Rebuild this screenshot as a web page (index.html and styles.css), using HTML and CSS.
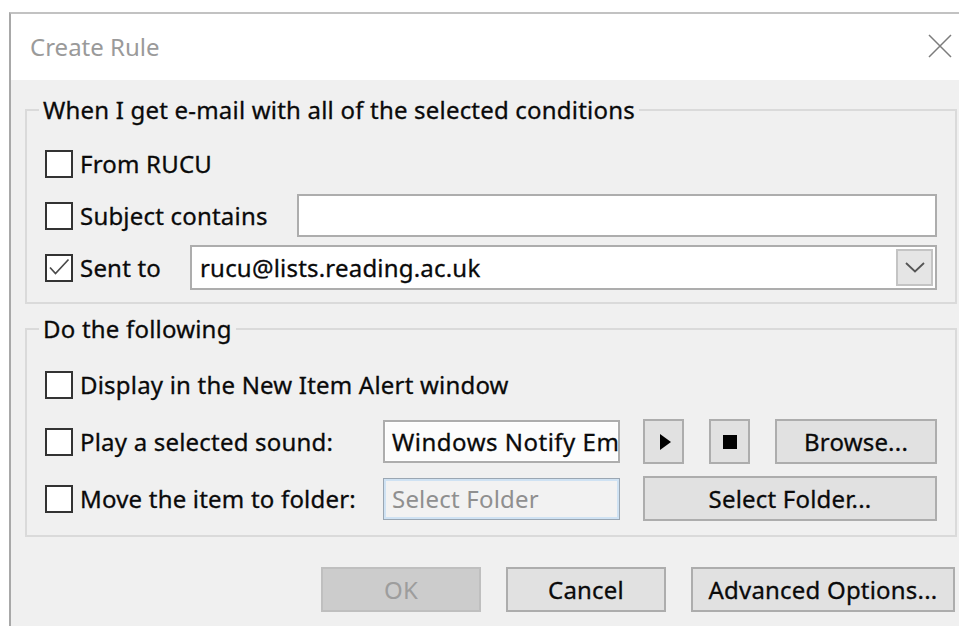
FILE: index.html
```html
<!DOCTYPE html>
<html lang="en">
<head>
<meta charset="utf-8">
<title>Create Rule</title>
<link rel="stylesheet" href="styles.css">
</head>
<body>
<div class="desk">
  <div class="dialog">
    <div class="titlebar">
      <span class="title">Create Rule</span>
      <span class="close">
        <svg width="24" height="24" viewBox="0 0 24 24"><path d="M1 1L23 23M23 1L1 23" stroke="#7c7c7c" stroke-width="1.5" fill="none"/></svg>
      </span>
    </div>
    <div class="content">
      <fieldset class="group group-conditions">
        <legend>When I get e-mail with all of the selected conditions</legend>
        <div class="row">
          <label class="check"><span class="box"></span>From RUCU</label>
        </div>
        <div class="row">
          <label class="check w-subject"><span class="box"></span>Subject contains</label>
          <span class="field grow"></span>
        </div>
        <div class="row">
          <label class="check w-sent"><span class="box"><svg width="24" height="24" viewBox="0 0 24 24"><path d="M3 11.5L8.5 17.5L21.5 3.5" stroke="#4a4a4a" stroke-width="1.7" fill="none"/></svg></span>Sent to</label>
          <span class="combo grow">
            <span class="combo-text">rucu@lists.reading.ac.uk</span>
            <span class="drop"><svg width="20" height="11" viewBox="0 0 20 11"><path d="M1 1L10 9.5L19 1" stroke="#555" stroke-width="1.8" fill="none"/></svg></span>
          </span>
        </div>
      </fieldset>

      <fieldset class="group group-actions">
        <legend>Do the following</legend>
        <div class="row">
          <label class="check"><span class="box"></span>Display in the New Item Alert window</label>
        </div>
        <div class="row">
          <label class="check w-action"><span class="box"></span>Play a selected sound:</label>
          <span class="field sound"><span class="field-text">Windows Notify Email</span></span>
          <span class="btn icon-btn"><span class="play"></span></span>
          <span class="btn icon-btn"><span class="stop"></span></span>
          <span class="btn grow">Browse...</span>
        </div>
        <div class="row">
          <label class="check w-action"><span class="box"></span>Move the item to folder:</label>
          <span class="field folder"><span class="field-text placeholder">Select Folder</span></span>
          <span class="btn grow">Select Folder...</span>
        </div>
      </fieldset>

      <div class="buttons">
        <span class="btn btn-ok disabled">OK</span>
        <span class="btn btn-cancel">Cancel</span>
        <span class="btn btn-advanced">Advanced Options...</span>
      </div>
    </div>
  </div>
</div>
</body>
</html>
```

FILE: styles.css
```css
html, body {
  margin: 0;
  padding: 0;
  background: #ffffff;
  overflow: hidden;
  height: 626px;
}

body {
  font-family: "Noto Sans", "Open Sans", sans-serif;
  font-size: 24px;
  letter-spacing: 0.2px;
  color: #0a0a0a;
}

.desk {
  padding: 12px 0 0 9px;
}

.dialog {
  box-sizing: border-box;
  width: 964px;
  height: 640px;
  border-top: 2px solid #c2c2c2;
  border-left: 2px solid #a8a8a8;
  border-right: 2px solid #a8a8a8;
  background: #f0f0f0;
  -webkit-text-stroke: 0.3px #0a0a0a;
}

/* window caption */
.titlebar {
  height: 66px;
  background: #ffffff;
  display: flex;
  align-items: center;
  justify-content: space-between;
  padding: 0 19px 0 19px;
}

.title {
  color: #9a9a9a;
  font-size: 24px;
  line-height: 28px;
  margin-top: -1px;
  letter-spacing: 0;
  -webkit-text-stroke: 0;
}

.close {
  display: flex;
  margin-top: -2px;
}

.content {
  padding: 17px 14px 0 14px;
}

/* group boxes */
.group {
  margin: 0;
  border: 2px solid #dadada;
  padding: 18px 18px 12px 18px;
  display: flex;
  flex-direction: column;
  gap: 7px;
}

.group legend {
  padding: 0 4px;
  margin-left: -6px;
  line-height: 26px;
}

.group-actions {
  margin-top: 12px;
  padding-top: 20px;
  padding-bottom: 14px;
  gap: 12px;
}

.row {
  height: 45px;
  display: flex;
  align-items: center;
}

.grow {
  flex: 1;
}

/* checkbox + caption */
.check {
  display: flex;
  align-items: center;
  gap: 7px;
  white-space: nowrap;
  flex: none;
}

.w-subject { width: 252px; }
.w-sent { width: 145px; }
.w-action { width: 338px; }

.box {
  box-sizing: border-box;
  width: 28px;
  height: 28px;
  border: 2px solid #333;
  background: #fff;
  display: flex;
  align-items: center;
  justify-content: center;
}

/* edit fields */
.field {
  box-sizing: border-box;
  height: 43px;
  border: 2px solid #adadad;
  background: #fff;
  display: flex;
  align-items: center;
  overflow: hidden;
}

.field-text {
  padding-left: 7px;
  white-space: nowrap;
}

.sound {
  width: 237px;
  flex: none;
  margin-right: 23px;
  box-shadow: inset 0 0 0 1px #fff;
  background: #fcfcfc;
}

.sound .field-text {
  letter-spacing: 0.5px;
}

.folder {
  width: 237px;
  flex: none;
  margin-right: 23px;
  height: 42px;
  border: 1px solid #9aa6b2;
  box-shadow: inset 0 0 0 2px #cfe2f3;
  background: #f2f2f2;
}

.folder .field-text {
  padding-left: 8px;
}

.placeholder {
  color: #8f8f8f;
  -webkit-text-stroke: 0;
}

/* combo box */
.combo {
  box-sizing: border-box;
  height: 45px;
  border: 2px solid #adadad;
  background: #fff;
  display: flex;
  align-items: center;
  justify-content: space-between;
  padding: 0 2px 0 8px;
}

.drop {
  box-sizing: border-box;
  width: 37px;
  height: 37px;
  border: 2px solid #c4c4c4;
  background: #e5e5e5;
  display: flex;
  align-items: center;
  justify-content: center;
}

/* push buttons */
.btn {
  box-sizing: border-box;
  height: 45px;
  border: 2px solid #adadad;
  background: #e1e1e1;
  display: flex;
  align-items: center;
  justify-content: center;
  white-space: nowrap;
}

.icon-btn {
  width: 41px;
  flex: none;
  margin-right: 25px;
}

.play {
  width: 0;
  height: 0;
  border-top: 8.5px solid transparent;
  border-bottom: 8.5px solid transparent;
  border-left: 11px solid #000;
  margin-left: 3px;
}

.stop {
  width: 14px;
  height: 14px;
  background: #000;
}

.buttons {
  display: flex;
  justify-content: flex-end;
  gap: 25px;
  margin-top: 30px;
  padding-right: 2px;
}

.btn-ok,
.btn-cancel {
  width: 160px;
}

.btn-advanced {
  width: 264px;
}

.disabled {
  background: #cccccc;
  border-color: #bfbfbf;
  color: #9d9d9d;
  -webkit-text-stroke: 0;
}
```
